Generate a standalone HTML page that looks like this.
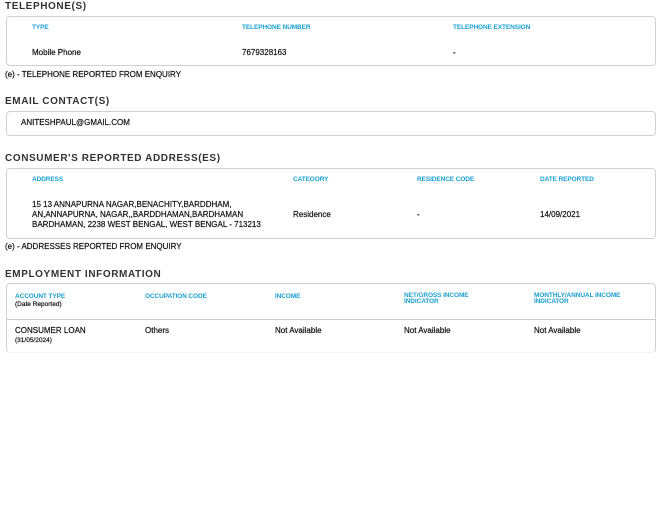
<!DOCTYPE html>
<html><head><meta charset="utf-8"><style>
body{margin:0;width:667px;height:518px;background:#fff;font-family:"Liberation Sans",sans-serif;color:#222;position:relative;overflow:hidden}
.a{position:absolute;white-space:nowrap}
.h{font-size:10px;font-weight:bold;letter-spacing:.6px;color:#333}
.t{font-size:8px;color:#111;-webkit-text-stroke:.2px #111}
.c{font-size:6.5px;font-weight:bold;color:#1a9fd0;letter-spacing:-.1px}
.box{position:absolute;border:1px solid #d0d0d0;border-radius:4px;box-sizing:border-box}
</style></head><body>
<div class="a h" style="left:5px;top:1px">TELEPHONE(S)</div>
<div class="box" style="left:6px;top:16px;width:650px;height:50px"></div>
<div class="a c" style="left:32px;top:24px">TYPE</div>
<div class="a c" style="left:242px;top:24px">TELEPHONE NUMBER</div>
<div class="a c" style="left:453px;top:24px">TELEPHONE EXTENSION</div>
<div class="a t" style="left:32px;top:48px">Mobile Phone</div>
<div class="a t" style="left:242px;top:48px">7679328163</div>
<div class="a t" style="left:453px;top:48px">-</div>
<div class="a t" style="left:5px;top:70px">(e) - TELEPHONE REPORTED FROM ENQUIRY</div>

<div class="a h" style="left:5px;top:96px">EMAIL CONTACT(S)</div>
<div class="box" style="left:6px;top:111px;width:650px;height:25px"></div>
<div class="a t" style="left:21px;top:118px">ANITESHPAUL@GMAIL.COM</div>

<div class="a h" style="left:5px;top:153px">CONSUMER'S REPORTED ADDRESS(ES)</div>
<div class="box" style="left:6px;top:168px;width:650px;height:71px"></div>
<div class="a c" style="left:32px;top:176px">ADDRESS</div>
<div class="a c" style="left:293px;top:176px">CATEGORY</div>
<div class="a c" style="left:417px;top:176px">RESIDENCE CODE</div>
<div class="a c" style="left:540px;top:176px">DATE REPORTED</div>
<div class="a t" style="left:32px;top:200px;line-height:10px">15 13 ANNAPURNA NAGAR,BENACHITY,BARDDHAM,<br>AN,ANNAPURNA, NAGAR,,BARDDHAMAN,BARDHAMAN<br>BARDHAMAN, 2238 WEST BENGAL, WEST BENGAL - 713213</div>
<div class="a t" style="left:293px;top:210px">Residence</div>
<div class="a t" style="left:417px;top:210px">-</div>
<div class="a t" style="left:540px;top:210px">14/09/2021</div>
<div class="a t" style="left:5px;top:242px">(e) - ADDRESSES REPORTED FROM ENQUIRY</div>

<div class="a h" style="left:5px;top:269px">EMPLOYMENT INFORMATION</div>
<div class="box" style="left:6px;top:283px;width:650px;height:70px;border-bottom-color:#f4f4f4"></div>
<div class="a" style="left:7px;top:319px;width:648px;height:1px;background:#ccc"></div>
<div class="a c" style="left:15px;top:293px">ACCOUNT TYPE</div>
<div class="a t" style="left:15px;top:301px;font-size:6.5px">(Date Reported)</div>
<div class="a c" style="left:145px;top:293px">OCCUPATION CODE</div>
<div class="a c" style="left:275px;top:293px">INCOME</div>
<div class="a c" style="left:404px;top:293px;line-height:6px">NET/GROSS INCOME<br>INDICATOR</div>
<div class="a c" style="left:534px;top:293px;line-height:6px">MONTHLY/ANNUAL INCOME<br>INDICATOR</div>
<div class="a t" style="left:15px;top:326px">CONSUMER LOAN</div>
<div class="a t" style="left:15px;top:337px;font-size:6.5px">(31/05/2024)</div>
<div class="a t" style="left:145px;top:326px">Others</div>
<div class="a t" style="left:275px;top:326px">Not Available</div>
<div class="a t" style="left:404px;top:326px">Not Available</div>
<div class="a t" style="left:534px;top:326px">Not Available</div>
</body></html>
